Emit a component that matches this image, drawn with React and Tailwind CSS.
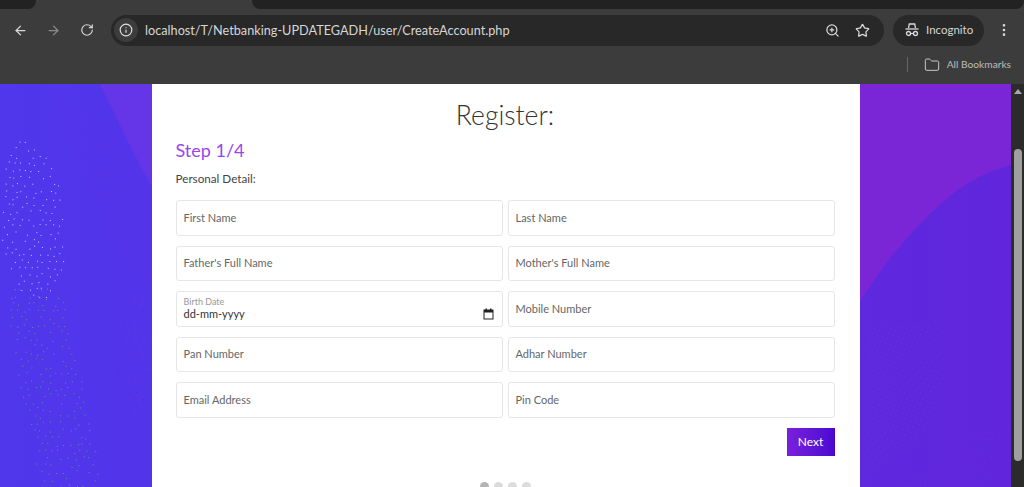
import { ArrowLeft, ArrowRight, RotateCw, Info, ZoomIn, Star, Folder, EllipsisVertical } from "lucide-react";

const FONT = "font-['Lato','Noto_Sans',sans-serif]";

const fields = [
  ["First Name", "Last Name"],
  ["Father's Full Name", "Mother's Full Name"],
  [null, "Mobile Number"],
  ["Pan Number", "Adhar Number"],
  ["Email Address", "Pin Code"],
];

// staggered dot grid with some jitter, kept only where inside() says so
const makeDots = (x0, y0, x1, y1, step, seed, inside) => {
  const dots = [];
  let s = seed;
  const next = () => {
    s = (s * 16807) % 2147483647;
    return s / 2147483647;
  };
  let row = 0;
  for (let y = y0; y < y1; y += step) {
    for (let x = x0 + (row % 2) * (step / 2); x < x1; x += step) {
      const jx = x + (next() - 0.5) * 4;
      const jy = y + (next() - 0.5) * 4;
      if (inside(jx, jy) && next() > 0.15) dots.push([jx, jy]);
    }
    row++;
  }
  return dots;
};

const lightDots = makeDots(4, 58, 72, 218, 7, 11, (x, y) => {
  const dx = (x - 32) / 33 - (y - 140) / 400;
  const dy = (y - 138) / 82;
  return dx * dx + dy * dy < 1;
});
const greenDots = makeDots(6, 206, 110, 403, 7, 29, (x, y) => {
  const mid = 32 + (y - 206) * 0.2;
  return Math.abs(x - mid) < 31 && x > 8;
});
const darkDots = makeDots(115, 190, 152, 330, 9, 47, (x, y) => (x - 135) ** 2 / 340 + (y - 270) ** 2 / 3600 < 1);
const cornerDots = makeDots(905, 335, 1008, 403, 6, 83, (x, y) => y > 403 - (x - 900) * 0.75);

const Background = () => (
  <svg className="absolute inset-0 h-full w-full" viewBox="0 0 1011 403" preserveAspectRatio="none">
    <defs>
      <linearGradient id="page" x1="0" y1="0" x2="1" y2="0">
        <stop offset="0" stopColor="#5037ec" />
        <stop offset="1" stopColor="#6126dc" />
      </linearGradient>
      <pattern id="fine" width="3" height="3" patternUnits="userSpaceOnUse" patternTransform="rotate(30)">
        <rect width="1" height="1" fill="#6a2fdc" />
      </pattern>
      <pattern id="fineRight" width="5" height="5" patternUnits="userSpaceOnUse" patternTransform="rotate(20)">
        <rect width="1" height="1" fill="#7136e4" />
      </pattern>
    </defs>
    <rect width="1011" height="403" fill="url(#page)" />
    <path d="M100 0 C118 35 135 75 152 102 L152 0 Z" fill="#6536e8" />
    <path d="M50 5 C90 20 125 60 152 105 V200 C120 190 90 120 50 5 Z" fill="url(#fine)" opacity="0.55" />
    <path d="M860 0 H1011 V81 C975 90 950 110 925 135 C900 160 880 185 860 218 Z" fill="#7a26d6" />
    <path d="M868 240 H945 V300 C930 350 900 380 868 385 Z" fill="url(#fineRight)" opacity="0.7" />
    {lightDots.map(([x, y], i) => (
      <rect key={i} x={x} y={y} width="1" height="1" fill="#c3c8f5" />
    ))}
    {greenDots.map(([x, y], i) => (
      <rect key={i} x={x} y={y} width="1" height="1" fill="#5c9a78" />
    ))}
    {darkDots.map(([x, y], i) => (
      <rect key={i} x={x} y={y} width="1" height="1" fill="#6a1fc0" />
    ))}
    {cornerDots.map(([x, y], i) => (
      <rect key={i} x={x} y={y} width="1" height="1" fill="#7a2bd0" />
    ))}
  </svg>
);

const IncognitoIcon = () => (
  <svg width="16" height="16" viewBox="0 0 16 16" fill="none" stroke="#d8d8d8" strokeWidth="1.3">
    <path d="M4.5 6 L5.3 2 H10.7 L11.5 6" />
    <path d="M1.5 7 H14.5" />
    <circle cx="4.5" cy="11.5" r="2" />
    <circle cx="11.5" cy="11.5" r="2" />
    <path d="M6.5 11.5 H9.5" />
  </svg>
);

const DateIcon = () => (
  <svg width="11" height="12" viewBox="0 0 11 12" fill="none">
    <rect x="1" y="2" width="9" height="9" stroke="#222222" strokeWidth="1" />
    <rect x="1" y="2" width="9" height="2.5" fill="#222222" />
    <rect x="2.5" y="0.5" width="1.5" height="2" fill="#222222" />
    <rect x="7" y="0.5" width="1.5" height="2" fill="#222222" />
  </svg>
);

const BrowserChrome = () => (
  <div className="h-[84px] shrink-0 bg-[#3c3c3c]">
    <div className="flex h-[9px]">
      <div className="h-[9px] w-[36px] rounded-br-lg bg-[#222222]" />
      <div className="ml-[216px] h-[9px] flex-1 rounded-b-lg bg-[#222222]" />
    </div>
    <div className="flex h-[42px] items-center pl-[13px] pr-[11px]">
      <ArrowLeft size={15} className="text-[#d8d8d8]" />
      <ArrowRight size={15} className="ml-[18px] text-[#8a8a8a]" />
      <RotateCw size={14} className="ml-[19px] text-[#d8d8d8]" />
      <div className="ml-[17px] flex h-[31px] w-[773px] items-center rounded-full bg-[#282828] pl-[3px] pr-[14px]">
        <div className="flex h-[24px] w-[24px] items-center justify-center rounded-full bg-[#3c3c3c]">
          <Info size={14} className="text-[#e0e0e0]" />
        </div>
        <span className={`ml-[7px] flex-1 pt-[1px] text-[12.7px] text-[#d6d6d6] ${FONT}`}>
          localhost/T/Netbanking-UPDATEGADH/user/CreateAccount.php
        </span>
        <ZoomIn size={15} className="text-[#d8d8d8]" />
        <Star size={15} className="ml-[15px] text-[#d8d8d8]" />
      </div>
      <div className="ml-[9px] flex h-[31px] w-[91px] items-center rounded-full bg-[#282828] pl-[11px]">
        <IncognitoIcon />
        <span className={`ml-[6px] text-[11.5px] text-[#d6d6d6] ${FONT}`}>Incognito</span>
      </div>
      <EllipsisVertical size={16} className="ml-[12px] text-[#d8d8d8]" />
    </div>
    <div className="flex h-[27px] items-center justify-end pr-[13px]">
      <div className="h-[15px] w-px bg-[#666666]" />
      <Folder size={16} strokeWidth={1.5} className="ml-[16px] text-[#c8c8c8]" />
      <span className={`ml-[7px] text-[10.2px] text-[#bdbdbd] ${FONT}`}>All Bookmarks</span>
    </div>
  </div>
);

const Field = ({ label }) => (
  <div className="flex h-[35.5px] items-center rounded-[3px] border border-[#e6e6e6] bg-white px-[7px]">
    <span className="text-[11px] text-[#666666]">{label}</span>
  </div>
);

const DateField = () => (
  <div className="flex h-[35.5px] flex-col justify-center rounded-[3px] border border-[#e6e6e6] bg-white px-[7px]">
    <span className="text-[9px] leading-[11px] text-[#999999]">Birth Date</span>
    <div className="flex items-center justify-between pr-[1px]">
      <span className="text-[11px] leading-[14px] text-[#333333]">dd-mm-yyyy</span>
      <DateIcon />
    </div>
  </div>
);

const RegisterCard = () => (
  <div className={`relative mx-auto flex w-[708px] flex-col bg-white pl-[24px] pr-[25px] ${FONT}`}>
    <h1 className="mt-[13px] text-center text-[26.5px] leading-[36px] font-light text-[#333333]">Register:</h1>
    <h2 className="mt-[5px] text-[18px] leading-[24px] text-[#9a45ee]">Step 1/4</h2>
    <p className="mt-[8px] text-[11.7px] leading-[16px] text-[#444444]">Personal Detail:</p>
    <div className="mt-[14px] grid grid-cols-2 gap-x-[5px] gap-y-[10px]">
      {fields.map((row) =>
        row.map((label, i) =>
          label ? <Field key={label} label={label} /> : <DateField key={i} />
        )
      )}
    </div>
    <div className="mt-[10px] flex justify-end">
      <button className="h-[28px] w-[48px] bg-gradient-to-r from-[#7a1fdc] to-[#4a06d0] text-[12px] text-white">
        Next
      </button>
    </div>
    <div className="mt-[26px] flex h-[5px] items-start justify-center gap-[5px] overflow-hidden">
      <div className="h-[9px] w-[9px] shrink-0 rounded-full bg-[#b3b3b3]" />
      <div className="h-[9px] w-[9px] shrink-0 rounded-full bg-[#dcdcdc]" />
      <div className="h-[9px] w-[9px] shrink-0 rounded-full bg-[#dcdcdc]" />
      <div className="h-[9px] w-[9px] shrink-0 rounded-full bg-[#dcdcdc]" />
    </div>
  </div>
);

const Scrollbar = () => (
  <div className="flex w-[13px] shrink-0 flex-col items-center bg-[#2b2b2b] pt-[5px]">
    <div className="h-0 w-0 border-x-[4px] border-b-[5px] border-x-transparent border-b-[#a8a8a8]" />
    <div className="mt-[55px] h-[312px] w-[8px] rounded-full bg-[#9f9f9f]" />
  </div>
);

export default function App() {
  return (
    <div className="flex h-[487px] w-[1024px] flex-col overflow-hidden">
      <BrowserChrome />
      <div className="flex min-h-0 flex-1">
        <div className="relative min-w-0 flex-1 overflow-hidden">
          <Background />
          <RegisterCard />
        </div>
        <Scrollbar />
      </div>
    </div>
  );
}
